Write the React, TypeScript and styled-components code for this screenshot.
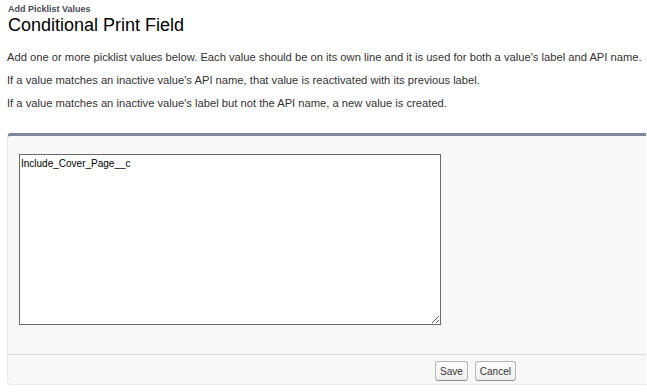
import React from "react";
import styled, { createGlobalStyle } from "styled-components";

const GlobalStyle = createGlobalStyle`
    body {
        margin: 0;
        background: #ffffff;
        font-family: "Liberation Sans", Arial, sans-serif;
        color: #333333;
    }
`

const Page = styled.div`
    padding: 4px 1px 0 7px;
`

const Header = styled.div`
    display: flex;
    flex-direction: column;
    padding-left: 1px;
`

const Kicker = styled.div`
    font-size: 9px;
    font-weight: bold;
    color: #4a4a56;
    line-height: 11px;
`

const Title = styled.h1`
    margin: 0;
    font-size: 18px;
    font-weight: normal;
    color: #000000;
    line-height: 20px;
`

const Intro = styled.div`
    margin-top: 16px;
    display: flex;
    flex-direction: column;
    gap: 11px;
`

const Para = styled.p`
    margin: 0;
    font-size: 11.2px;
    line-height: 12px;
    color: #333333;
    white-space: nowrap;
`

const Panel = styled.div`
    margin-top: 24px;
    background: #f8f8f8;
    border-top: 3px solid #7e879c;
    border-left: 1px solid #eaeaea;
    border-bottom: 1px solid #eaeaea;
    border-radius: 4px 0 0 4px;
`

const Body = styled.div`
    padding: 18px 0 29px 11px;
    border-bottom: 1px solid #dbdbdb;
`

const ValuesInput = styled.textarea`
    display: block;
    box-sizing: border-box;
    width: 422px;
    height: 171px;
    margin: 0;
    padding: 3px 1px;
    border: 1px solid #6b6b6b;
    font-family: "Liberation Sans", Arial, sans-serif;
    font-size: 10px;
    color: #000000;
    background: #ffffff;
    resize: both;
`

const Footer = styled.div`
    display: flex;
    gap: 7px;
    padding: 6px 0 3px 427px;
`

const Button = styled.button`
    height: 20px;
    padding: 0 4px;
    border: 1px solid #b5b5b5;
    border-bottom-color: #8a8a8a;
    border-radius: 3px;
    background: linear-gradient(#ffffff, #eeeeee);
    font-family: "Liberation Sans", Arial, sans-serif;
    font-size: 10px;
    font-weight: normal;
    color: #333333;
`

export default function App() {
    return (
        <>
            <GlobalStyle />
            <Page>
                <Header>
                    <Kicker>Add Picklist Values</Kicker>
                    <Title>Conditional Print Field</Title>
                </Header>
                <Intro>
                    <Para>Add one or more picklist values below. Each value should be on its own line and it is used for both a value's label and API name.</Para>
                    <Para>If a value matches an inactive value's API name, that value is reactivated with its previous label.</Para>
                    <Para>If a value matches an inactive value's label but not the API name, a new value is created.</Para>
                </Intro>
                <Panel>
                    <Body>
                        <ValuesInput defaultValue="Include_Cover_Page__c" />
                    </Body>
                    <Footer>
                        <Button>Save</Button>
                        <Button>Cancel</Button>
                    </Footer>
                </Panel>
            </Page>
        </>
    );
}
